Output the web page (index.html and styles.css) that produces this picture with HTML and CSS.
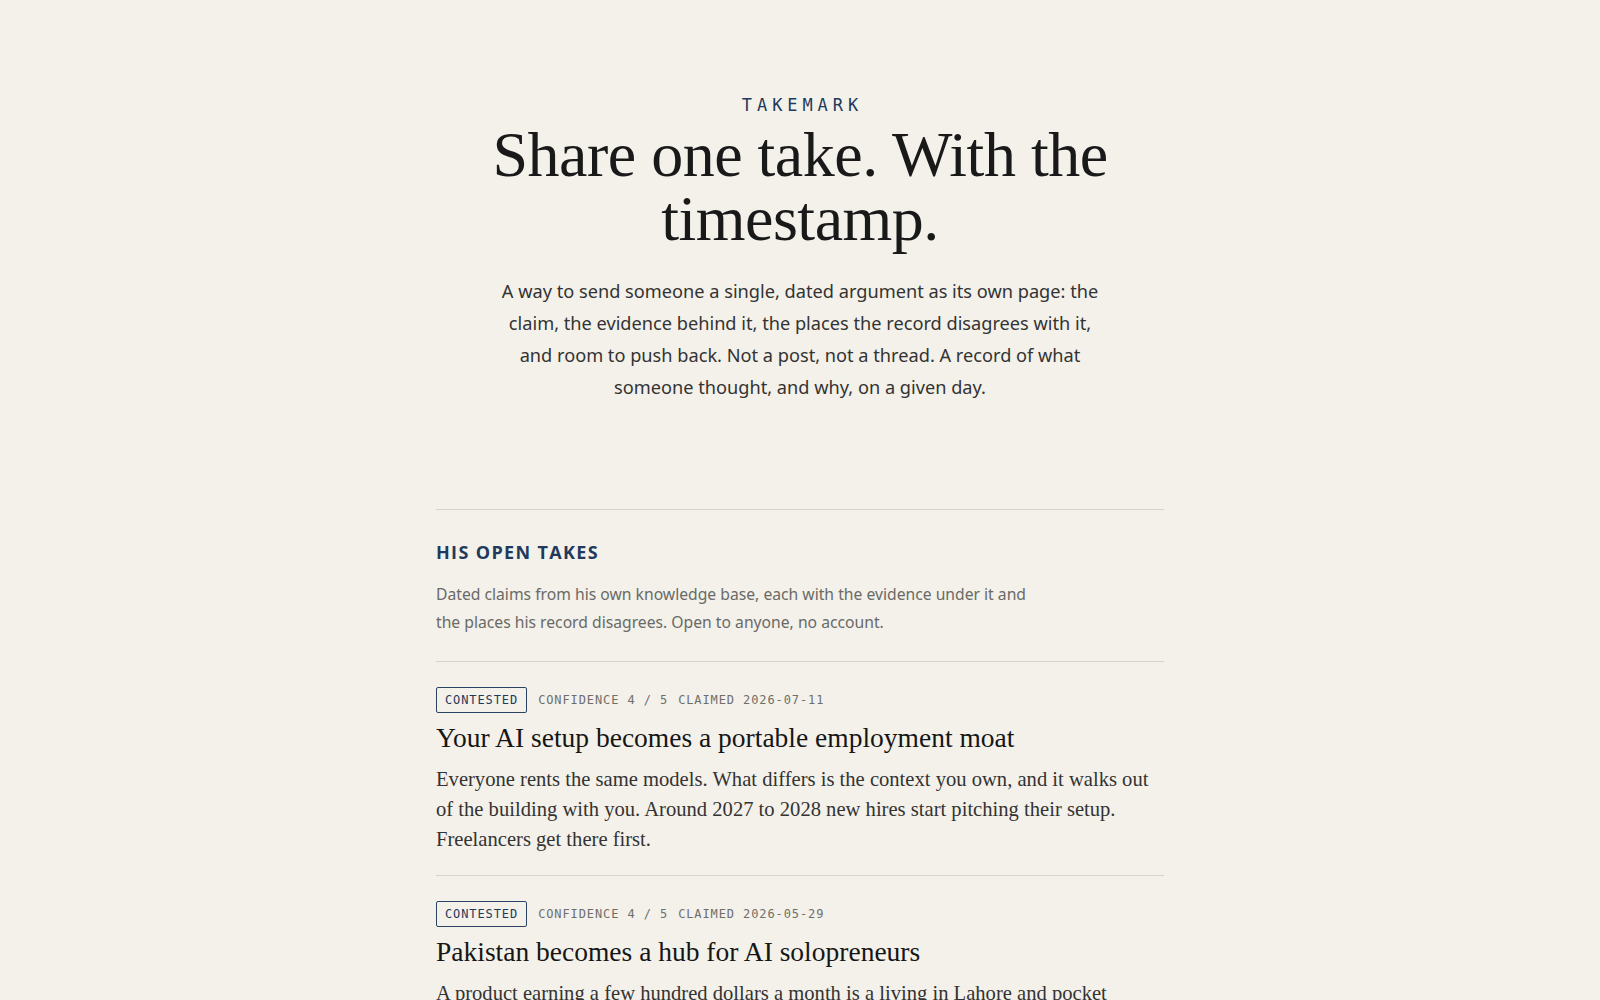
FILE: index.html
```html
<!DOCTYPE html>
<html lang="en">
<head>
<meta charset="utf-8">
<title>Takemark</title>
<link rel="stylesheet" href="styles.css">
</head>
<body>
<main class="page">
  <header class="hero">
    <div class="brand">TAKEMARK</div>
    <h1 class="headline">Share one take. With the timestamp.</h1>
    <p class="lead">A way to send someone a single, dated argument as its own page: the claim, the evidence behind it, the places the record disagrees with it, and room to push back. Not a post, not a thread. A record of what someone thought, and why, on a given day.</p>
  </header>

  <section class="takes">
    <div class="takes-head">
      <h2 class="section-title">HIS OPEN TAKES</h2>
      <p class="section-desc">Dated claims from his own knowledge base, each with the evidence under it and the places his record disagrees. Open to anyone, no account.</p>
    </div>

    <article class="take">
      <div class="meta">
        <span class="badge">CONTESTED</span>
        <span class="meta-item">CONFIDENCE 4 / 5</span>
        <span class="meta-item">CLAIMED 2026-07-11</span>
      </div>
      <h3 class="take-title">Your AI setup becomes a portable employment moat</h3>
      <p class="take-body">Everyone rents the same models. What differs is the context you own, and it walks out of the building with you. Around 2027 to 2028 new hires start pitching their setup. Freelancers get there first.</p>
    </article>

    <article class="take">
      <div class="meta">
        <span class="badge">CONTESTED</span>
        <span class="meta-item">CONFIDENCE 4 / 5</span>
        <span class="meta-item">CLAIMED 2026-05-29</span>
      </div>
      <h3 class="take-title">Pakistan becomes a hub for AI solopreneurs</h3>
      <p class="take-body">A product earning a few hundred dollars a month is a living in Lahore and pocket money in London. The cheapest place to build from starts to matter more than where the customers are.</p>
    </article>
  </section>
</main>
</body>
</html>
```

FILE: styles.css
```css
* { box-sizing: border-box; }

html, body {
  margin: 0;
  padding: 0;
  background: #f3f1ea;
  color: #1b1b1b;
}

body {
  font-family: "Noto Sans", "Open Sans", sans-serif;
}

.page {
  width: 728px;
  margin: 0 auto;
  padding-top: 95px;
}

.hero {
  display: flex;
  flex-direction: column;
  align-items: center;
  text-align: center;
  padding-bottom: 106px;
}

.brand {
  font-family: "DejaVu Sans Mono", "Liberation Mono", monospace;
  font-size: 17px;
  letter-spacing: 0.29em;
  margin-right: -0.29em;
  color: #1f3a5c;
  line-height: 20px;
}

.headline {
  font-family: "Liberation Serif", serif;
  font-weight: 400;
  font-size: 64px;
  line-height: 64px;
  letter-spacing: -0.5px;
  margin: 8px 0 0;
  max-width: 660px;
  color: #191919;
}

.lead {
  font-family: "Noto Sans", sans-serif;
  font-size: 18.2px;
  line-height: 32px;
  color: #333;
  margin: 24px 0 0;
  max-width: 616px;
}

.takes-head {
  border-top: 1px solid #d7d4cc;
  padding: 30px 0 25px;
  border-bottom: 1px solid #d7d4cc;
}

.section-title {
  font-family: "Open Sans", "Noto Sans", sans-serif;
  font-weight: 700;
  font-size: 18px;
  letter-spacing: 0.075em;
  color: #1f3a5c;
  margin: 0;
  line-height: 24px;
}

.section-desc {
  font-family: "Noto Sans", sans-serif;
  font-size: 15.7px;
  line-height: 28px;
  color: #6a6a66;
  margin: 16px 0 0;
  max-width: 610px;
}

.take {
  padding: 25px 0 21px;
  border-bottom: 1px solid #d7d4cc;
}

.meta {
  display: flex;
  align-items: center;
  gap: 11px;
  font-family: "DejaVu Sans Mono", "Liberation Mono", monospace;
  font-size: 12px;
  letter-spacing: 0.075em;
  color: #6f6f6a;
}

.badge {
  display: inline-block;
  border: 1.5px solid #2b4466;
  border-radius: 2px;
  color: #1f3a5c;
  padding: 5px 8px;
  line-height: 14px;
  font-weight: 500;
}

.meta-item + .meta-item { margin-left: -1px; }

.take-title {
  font-family: "Liberation Serif", serif;
  font-weight: 400;
  font-size: 27.5px;
  line-height: 34px;
  color: #161616;
  margin: 8px 0 0;
}

.take-body {
  font-family: "Liberation Serif", serif;
  font-size: 20.6px;
  line-height: 30px;
  color: #333;
  margin: 9px 0 0;
}
```
